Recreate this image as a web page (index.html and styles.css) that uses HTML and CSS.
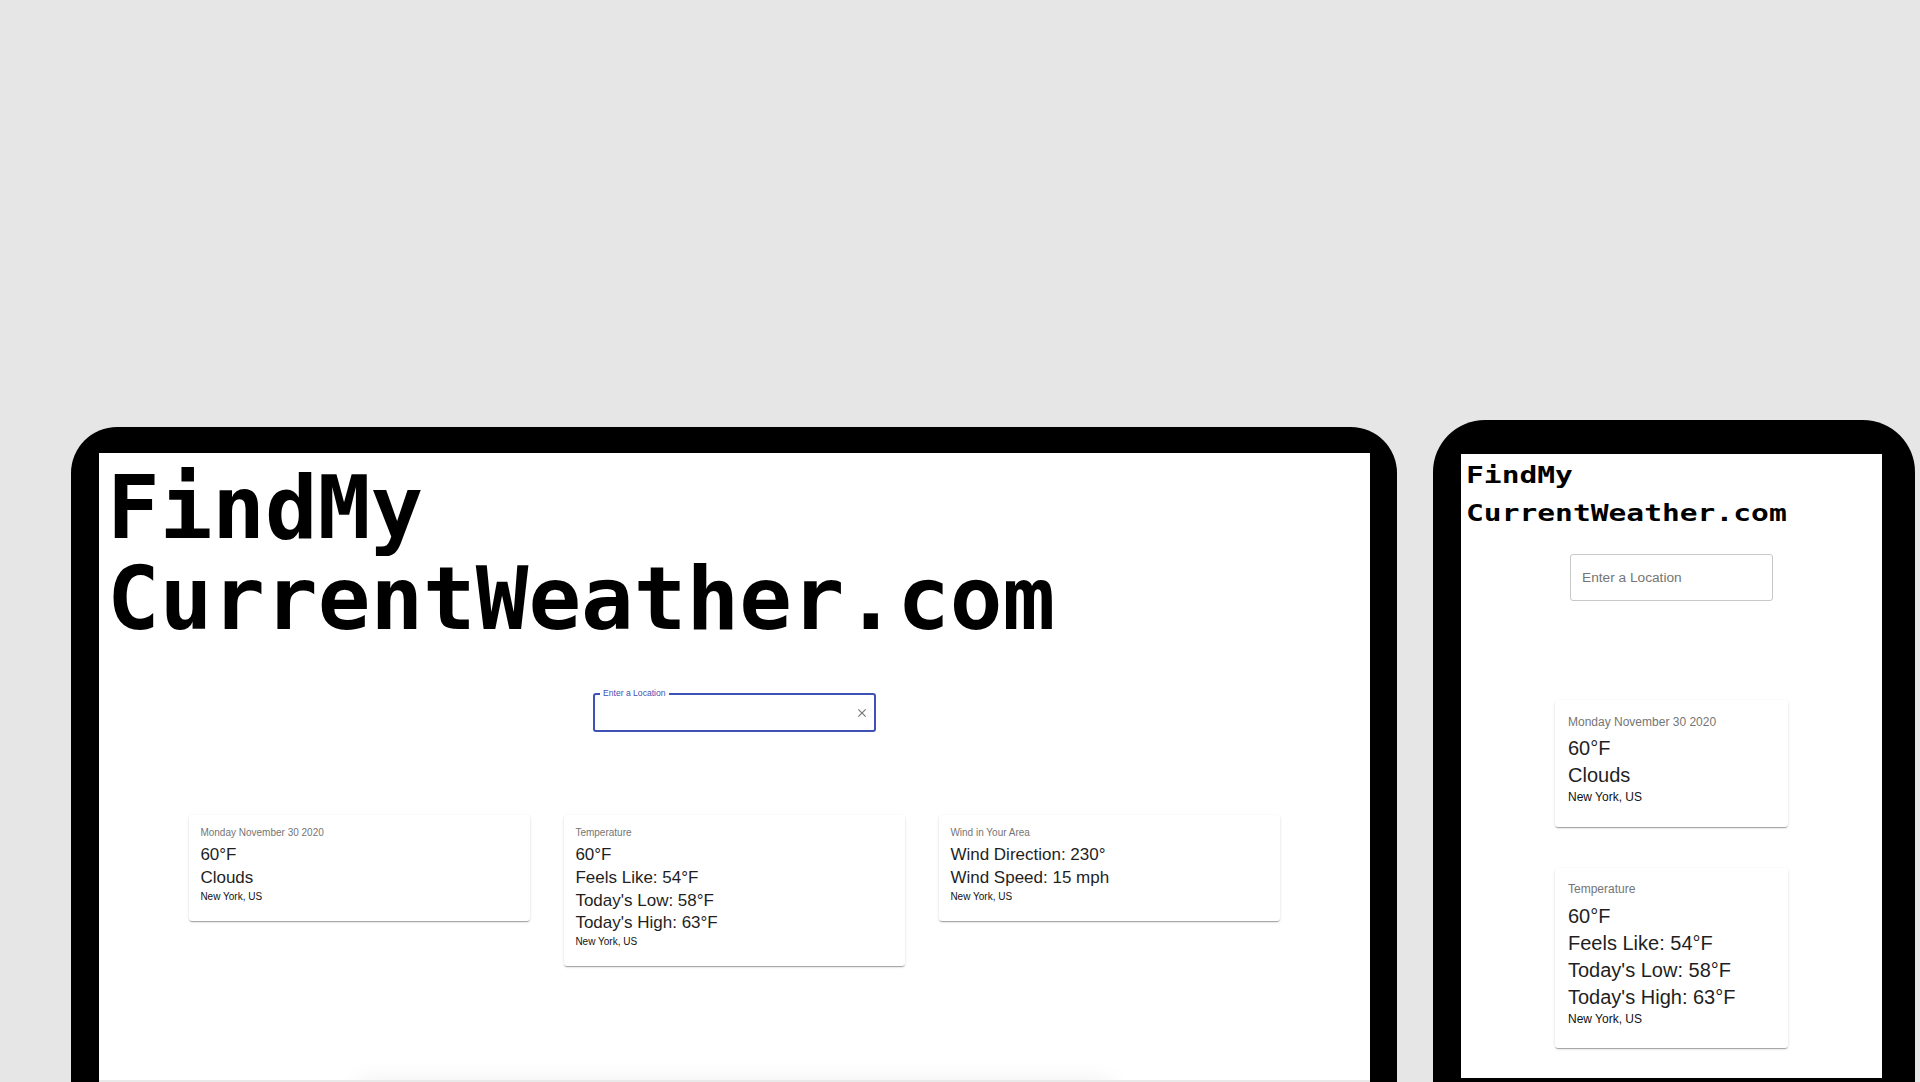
FILE: index.html
```html
<!DOCTYPE html>
<html lang="en">
<head>
<meta charset="utf-8">
<title>FindMyCurrentWeather.com</title>
<link rel="stylesheet" href="styles.css">
</head>
<body>
<div class="stage">
  <div class="laptop">
    <div class="screen-l">
      <h1 class="title-l">FindMy<br>CurrentWeather.com</h1>
      <div class="search-l">
        <div class="field-l">
          <span class="label-l">Enter a Location</span>
          <svg class="clear-l" viewBox="0 0 24 24" width="14" height="14"><path d="M19 6.41L17.59 5 12 10.59 6.41 5 5 6.41 10.59 12 5 17.59 6.41 19 12 13.41 17.59 19 19 17.59 13.41 12z" fill="#757575"/></svg>
        </div>
      </div>
      <div class="cards-l">
        <div class="card-l">
          <div class="over-l">Monday November 30 2020</div>
          <div class="main-l">60°F</div>
          <div class="main-l">Clouds</div>
          <div class="place-l">New York, US</div>
        </div>
        <div class="card-l">
          <div class="over-l">Temperature</div>
          <div class="main-l">60°F</div>
          <div class="main-l">Feels Like: 54°F</div>
          <div class="main-l">Today's Low: 58°F</div>
          <div class="main-l">Today's High: 63°F</div>
          <div class="place-l">New York, US</div>
        </div>
        <div class="card-l">
          <div class="over-l">Wind in Your Area</div>
          <div class="main-l">Wind Direction: 230°</div>
          <div class="main-l">Wind Speed: 15 mph</div>
          <div class="place-l">New York, US</div>
        </div>
      </div>
      <div class="ghost-l"></div>
    </div>
  </div>
  <div class="phone">
    <div class="screen-p">
      <h1 class="title-p">FindMy<br>CurrentWeather.com</h1>
      <div class="search-p">
        <div class="field-p">Enter a Location</div>
      </div>
      <div class="cards-p">
        <div class="card-p">
          <div class="over-p">Monday November 30 2020</div>
          <div class="main-p">60°F</div>
          <div class="main-p">Clouds</div>
          <div class="place-p">New York, US</div>
        </div>
        <div class="card-p">
          <div class="over-p">Temperature</div>
          <div class="main-p">60°F</div>
          <div class="main-p">Feels Like: 54°F</div>
          <div class="main-p">Today's Low: 58°F</div>
          <div class="main-p">Today's High: 63°F</div>
          <div class="place-p">New York, US</div>
        </div>
      </div>
    </div>
  </div>
</div>
</body>
</html>
```
FILE: styles.css
```css
html, body {
  margin: 0;
  padding: 0;
}
body {
  background: #e6e6e6;
  width: 1920px;
  height: 1082px;
  overflow: hidden;
  font-family: "Liberation Sans", Arial, sans-serif;
}
.stage {
  display: flex;
  align-items: flex-start;
  padding-left: 71px;
  gap: 36px;
}

/* ---------- laptop ---------- */
.laptop {
  margin-top: 427px;
  width: 1326px;
  height: 655px;
  box-sizing: border-box;
  background: #000;
  border-radius: 46px 46px 0 0;
  padding: 26px 27px 0 28px;
}
.screen-l {
  width: 1271px;
  height: 627px;
  box-sizing: content-box;
  background: #fff;
  overflow: hidden;
  border-bottom: 2px solid #e9e9e9;
}
.title-l {
  margin: 10px 0 0 8px;
  font-family: "DejaVu Sans Mono", monospace;
  font-weight: bold;
  font-size: 87.5px;
  line-height: 91px;
  color: #000;
  white-space: nowrap;
}
.search-l {
  margin-top: 48px;
  display: flex;
  justify-content: center;
}
.field-l {
  position: relative;
  width: 283px;
  height: 39px;
  box-sizing: border-box;
  border: 2px solid #3f51b5;
  border-radius: 3px;
  display: flex;
  align-items: center;
  justify-content: flex-end;
  padding-right: 5px;
}
.label-l {
  position: absolute;
  top: -6px;
  left: 5px;
  padding: 0 3px;
  background: #fff;
  font-size: 8.6px;
  line-height: 9px;
  color: #3f51b5;
}
.clear-l {
  display: block;
}
.cards-l {
  margin-top: 83px;
  display: flex;
  justify-content: center;
  align-items: flex-start;
  gap: 34px;
}
.card-l {
  width: 341px;
  box-sizing: border-box;
  background: #fff;
  border-radius: 3px;
  padding: 11.4px 11.4px 17px;
  box-shadow: 0 1.5px 1px -1px rgba(0,0,0,0.2), 0 1px 1px 0 rgba(0,0,0,0.14), 0 1px 3px 0 rgba(0,0,0,0.12);
}
.over-l {
  font-size: 10px;
  line-height: 14.2px;
  margin-bottom: 3.5px;
  color: #757575;
}
.main-l {
  font-size: 17px;
  line-height: 22.7px;
  color: #1f1f1f;
}
.place-l {
  font-size: 10px;
  line-height: 14.2px;
  color: #111;
}
.ghost-l {
  width: 753px;
  height: 120px;
  margin: 117px auto 0;
  background: #fff;
  box-shadow: 0 -2px 22px rgba(0,0,0,0.07);
}

/* ---------- phone ---------- */
.phone {
  margin-top: 420px;
  width: 482px;
  height: 662px;
  box-sizing: border-box;
  background: #000;
  border-radius: 52px 52px 0 0;
  padding: 34px 33px 0 28px;
}
.screen-p {
  width: 421px;
  height: 624px;
  background: #fff;
  overflow: hidden;
}
.title-p {
  margin: 2px 0 0 5px;
  font-family: "DejaVu Sans Mono", monospace;
  font-weight: bold;
  font-size: 29.6px;
  line-height: 48.1px;
  color: #000;
  transform: scaleY(0.79);
  transform-origin: 0 0;
  white-space: nowrap;
}
.search-p {
  margin-top: 2px;
  display: flex;
  justify-content: center;
}
.field-p {
  width: 203px;
  height: 47px;
  box-sizing: border-box;
  border: 1px solid #c8c8c8;
  border-radius: 3px;
  padding-left: 11px;
  display: flex;
  align-items: center;
  font-size: 13.7px;
  color: #757575;
}
.cards-p {
  margin-top: 99px;
  display: flex;
  flex-direction: column;
  align-items: center;
  gap: 41px;
}
.card-p {
  width: 233px;
  box-sizing: border-box;
  background: #fff;
  border-radius: 3px;
  padding: 13.5px 13px 20.5px;
  box-shadow: 0 2px 1px -1px rgba(0,0,0,0.2), 0 1px 1px 0 rgba(0,0,0,0.14), 0 1px 3px 0 rgba(0,0,0,0.12);
}
.over-p {
  font-size: 12px;
  line-height: 17px;
  margin-bottom: 4.5px;
  color: #757575;
}
.main-p {
  font-size: 20px;
  line-height: 27px;
  color: #1f1f1f;
}
.place-p {
  font-size: 12px;
  line-height: 17px;
  color: #111;
}
```
